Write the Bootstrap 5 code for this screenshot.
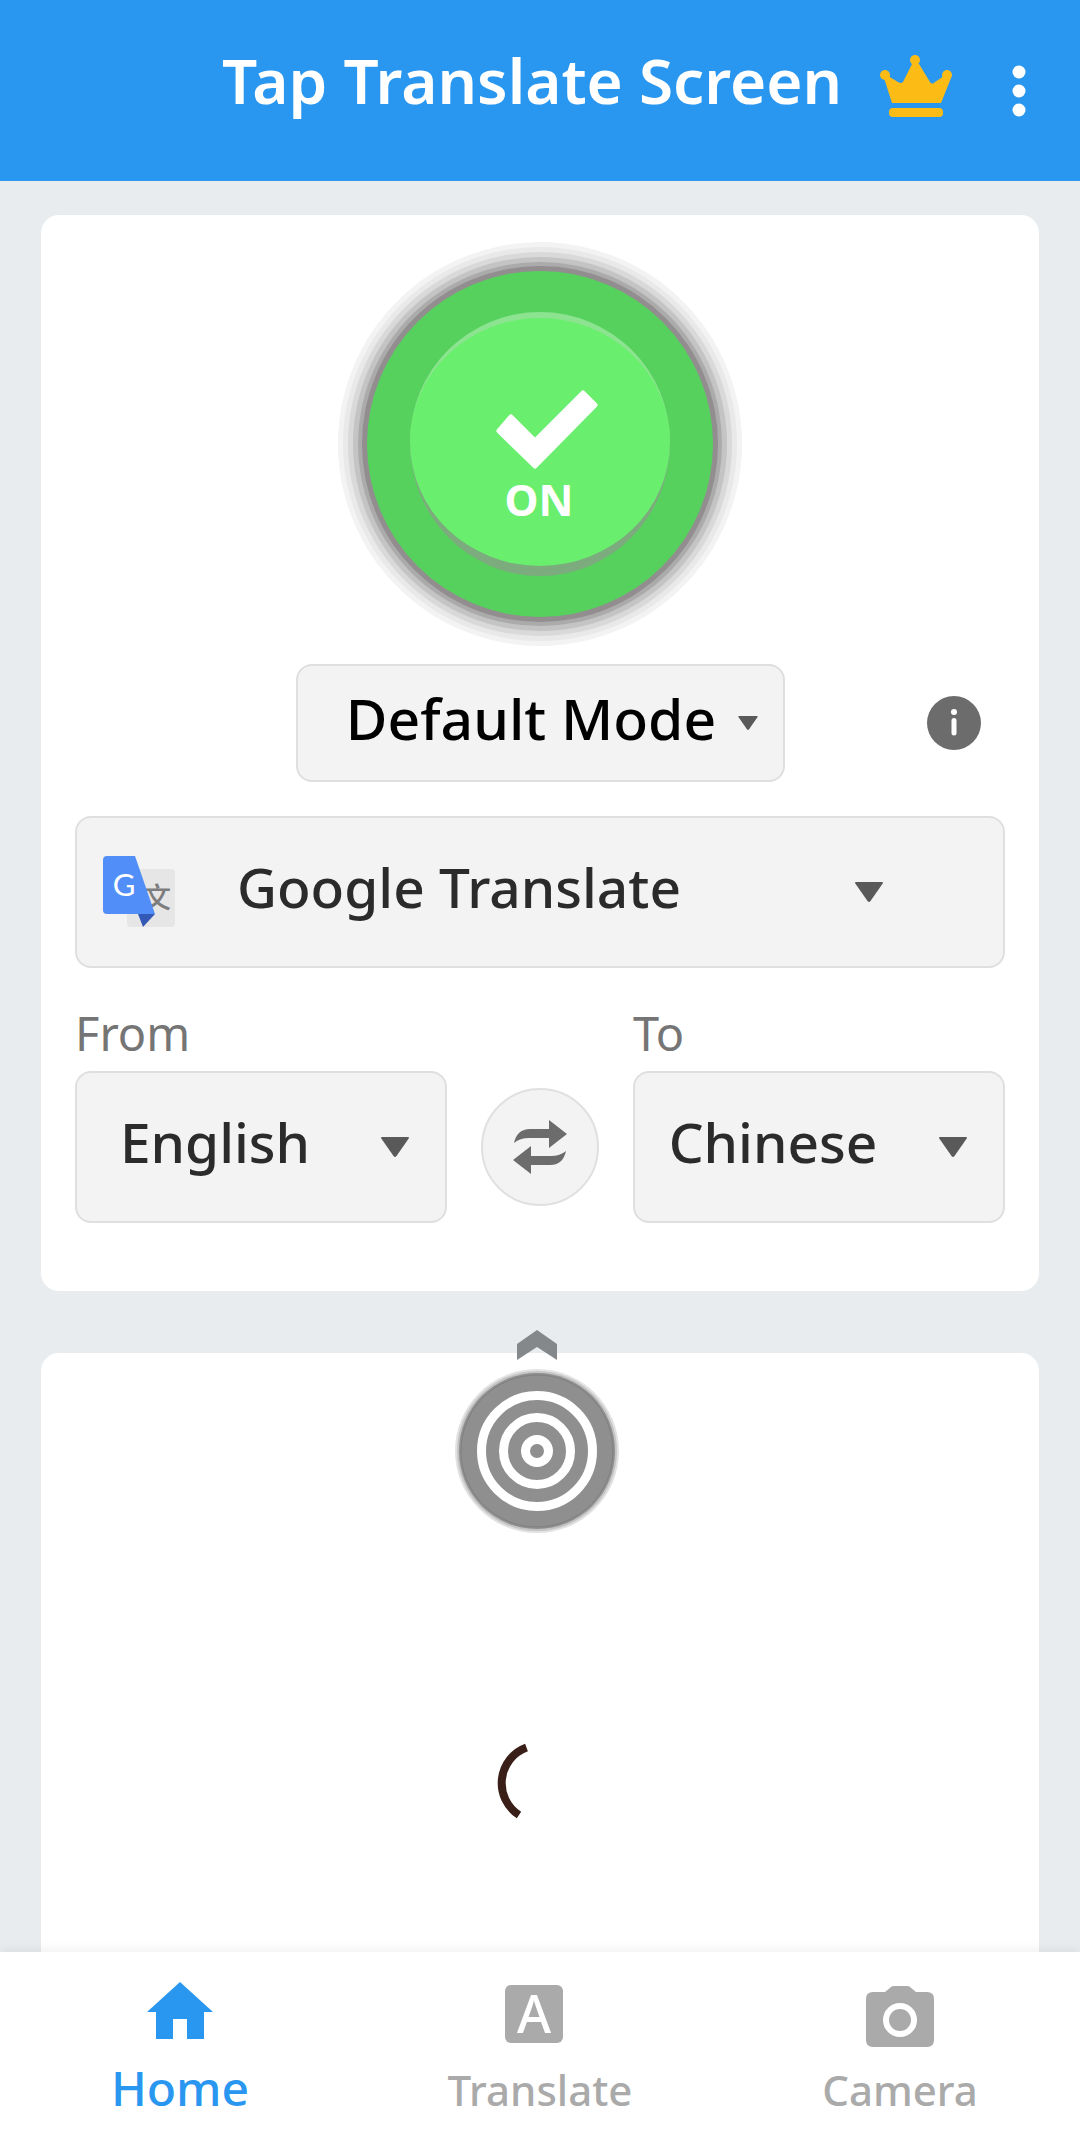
<!DOCTYPE html>
<html lang="en">
<head>
<meta charset="utf-8">
<meta name="viewport" content="width=device-width, initial-scale=1">
<title>Tap Translate Screen</title>
<link href="https://cdn.jsdelivr.net/npm/bootstrap@5.3.0/dist/css/bootstrap.min.css" rel="stylesheet">
<style>
  :root { --app-blue: #2997ef; --app-grey: #aaaaaa; }
  body { font-family: "Noto Sans", "Open Sans", sans-serif; background: #e8ecee; }
  svg { display: block; }
  .app-bar { background: var(--app-blue); height: 181px; padding: 0 48px 0 40px; }
  .app-title { font-size: 62px; line-height: 84px; font-weight: 600; padding-bottom: 21px; }
  .crown-btn { margin: 0 52px 10px 38px; }
  .app-main { padding: 34px 41px 0; }
  .panel { background: #fff; border-radius: 18px; }
  .panel-settings { padding: 24px 34px 68px; }
  .panel-preview { margin-top: 62px; padding-top: 387px; border-radius: 18px 18px 0 0; }
  .picker {
    height: 152px; padding: 0 92px 10px 0; border: 2px solid #dfdfdf; border-radius: 16px;
    background-color: #f3f3f3; color: #2b2b2b; font-size: 55px; line-height: 76px; font-weight: 500;
    text-align: center; text-align-last: center;
    background-image: url("data:image/svg+xml,%3Csvg xmlns='http://www.w3.org/2000/svg' viewBox='0 0 28 20'%3E%3Cpath d='M1 0H27Q28.500 0 27.700 1.500L15.500 19Q14 21 12.500 19L.3 1.500Q-.5 0 1 0Z' fill='%23595959'/%3E%3C/svg%3E");
    background-size: 28px 20px; background-position: right 36px center;
  }
  .picker-mode { height: 118px; width: 489px; padding-right: 18px; padding-left: 0; color: #000; font-size: 57px; background-size: 20px 14px; background-position: right 25px center; }
  .picker-engine { padding-left: 160px; text-align: left; text-align-last: left; background-position: right 120px center; }
  .engine-logo { left: 28px; top: 40px; pointer-events: none; }
  .mode-row { margin-top: 15px; }
  .engine-row { margin-top: 34px; }
  .lang-row { margin-top: 35px; }
  .lang-label { font-size: 47px; line-height: 60px; margin-bottom: 8px; color: #757575; }
  .info-btn { margin-right: 24px; }
  .swap-col { width: 186px; padding-bottom: 17px; }
  .swap-btn { width: 118px; height: 118px; border: 2px solid #e0e0e0; background: #f3f3f3; }
  .pull-handle { top: -25px; }
  .tab-bar { background: #fff; height: 185px; box-shadow: 0 -3px 10px rgba(0,0,0,.06); }
  .tab-item { padding-top: 28px; color: var(--app-grey); font-size: 42px; line-height: 64px; font-weight: 500; gap: 8px; }
  .tab-item.active { color: var(--app-blue); font-size: 48px; line-height: 60px; }
</style>
</head>
<body>
<div class="min-vh-100 d-flex flex-column">
  <header class="app-bar d-flex align-items-center justify-content-end">
    <h1 class="app-title text-white m-0">Tap Translate Screen</h1>
    <button type="button" class="crown-btn btn p-0 border-0" aria-label="Premium">
      <svg width="72" height="64" viewBox="0 0 72 64" fill="#fdbb16">
        <path d="M32 10H39L50 28Q52 31 55 28L64 22L71 24L61 49H12L4 24L8 22L18 28Q21 30 23 28Z"/>
        <circle cx="35" cy="6" r="5"/><circle cx="5" cy="21" r="5"/><circle cx="67" cy="21" r="5"/>
        <rect x="9" y="54" width="54" height="9" rx="4"/>
      </svg>
    </button>
    <button type="button" class="btn p-0 border-0" aria-label="More options">
      <svg width="28" height="56" viewBox="0 0 28 56" fill="#fff"><circle cx="15" cy="9" r="6.500"/><circle cx="15" cy="28" r="6.500"/><circle cx="15" cy="47" r="6.500"/></svg>
    </button>
  </header>

  <main class="app-main flex-grow-1 d-flex flex-column">
    <section class="panel panel-settings">
      <div class="d-flex justify-content-center">
        <button type="button" class="btn p-0 border-0 rounded-circle" aria-pressed="true">
          <svg width="410" height="410" viewBox="0 0 410 410">
            <circle cx="205" cy="205" r="202" fill="#f3f3f3"/>
            <circle cx="205" cy="205" r="197" fill="#e9e9e9"/>
            <circle cx="205" cy="205" r="192" fill="#d9d9d9"/>
            <circle cx="205" cy="205" r="187" fill="#c4c4c4"/>
            <circle cx="205" cy="205" r="182" fill="#ababab"/>
            <circle cx="205" cy="205" r="178" fill="#928e90"/>
            <circle cx="205" cy="205" r="173" fill="#57d15d"/>
            <circle cx="205" cy="203" r="130" fill="#8ce490"/>
            <path d="M75 204A130 133 0 0 0 335 204Z" fill="#7cac7e"/>
            <ellipse cx="205" cy="203" rx="130" ry="124" fill="#69ee6d"/>
            <path d="M176 178L200 202L248 154L260 166L200 227L164 192Z" fill="#fff" stroke="#fff" stroke-width="5" stroke-linejoin="round"/>
            <text x="204" y="277" text-anchor="middle" font-family="Noto Sans, sans-serif" font-weight="700" font-size="43" fill="#fff">ON</text>
          </svg>
        </button>
      </div>

      <div class="mode-row d-flex align-items-center">
        <div class="flex-fill w-25"></div>
        <select class="picker picker-mode form-select flex-shrink-0" aria-label="Mode"><option>Default Mode</option></select>
        <div class="flex-fill w-25 d-flex justify-content-end">
          <button type="button" class="info-btn btn p-0 border-0" aria-label="Information">
            <svg width="54" height="54" viewBox="0 0 54 54"><circle cx="27" cy="27" r="27" fill="#6c6c6c"/><circle cx="27" cy="16" r="3" fill="#fff"/><path d="M27 24.500V37" stroke="#fff" stroke-width="5" stroke-linecap="round"/></svg>
          </button>
        </div>
      </div>

      <div class="engine-row position-relative">
        <select class="picker picker-engine form-select" aria-label="Translation engine"><option>Google Translate</option></select>
        <svg class="engine-logo position-absolute" width="72" height="72" viewBox="0 0 72 72" aria-hidden="true">
          <rect x="24" y="13" width="48" height="58" rx="4" fill="#e6e6e6"/>
          <text x="40" y="52" font-family="Noto Sans CJK SC, sans-serif" font-weight="500" font-size="28" fill="#7d7d7d">文</text>
          <path d="M35 58H52L40 71Z" fill="#3458b5"/>
          <path d="M4 0H32L52 58H4Q0 58 0 54V4Q0 0 4 0Z" fill="#518ef8"/>
          <text x="21" y="40" text-anchor="middle" font-family="Lato, sans-serif" font-weight="400" font-size="31" fill="#fff">G</text>
        </svg>
      </div>

      <div class="lang-row d-flex align-items-end">
        <div class="flex-fill w-25">
          <label class="lang-label d-block" for="from">From</label>
          <select id="from" class="picker form-select"><option>English</option></select>
        </div>
        <div class="swap-col flex-shrink-0 d-flex justify-content-center">
          <button type="button" class="swap-btn btn rounded-circle p-0 d-flex align-items-center justify-content-center" aria-label="Swap languages">
            <svg width="56" height="56" viewBox="0 0 56 56" fill="#6c6c6c">
              <path d="M2 24Q5 10 18 10H37V1L55 15L37 29V19H17Q8 19 2 24Z"/>
              <path d="M54 32Q51 46 38 46H19V55L1 41L19 27V37H39Q48 37 54 32Z"/>
            </svg>
          </button>
        </div>
        <div class="flex-fill w-25">
          <label class="lang-label d-block" for="to">To</label>
          <select id="to" class="picker form-select"><option>Chinese</option></select>
        </div>
      </div>
    </section>

    <section class="panel panel-preview position-relative flex-grow-1 d-flex justify-content-center align-items-start">
      <svg class="pull-handle position-absolute" width="180" height="212" viewBox="0 0 180 212" aria-hidden="true">
        <path d="M87 2L107 16V32L87 19L67 32V16Z" fill="#84888a"/>
        <circle cx="87" cy="123" r="82" fill="#e2e2e2"/>
        <circle cx="87" cy="123" r="80" fill="#c4c4c4"/>
        <circle cx="87" cy="123" r="78" fill="#8f8f8f"/>
        <circle cx="87" cy="123" r="76" fill="none" stroke="#808080"/>
        <g fill="none" stroke="#fff" stroke-width="9"><circle cx="87" cy="123" r="55.500"/><circle cx="87" cy="123" r="33.500"/><circle cx="87" cy="123" r="11.500"/></g>
      </svg>
      <svg width="86" height="86" viewBox="0 0 86 86" role="status" aria-label="Loading"><path d="M29.500 7.500A38 38 0 0 0 22 75" fill="none" stroke="#3a1f18" stroke-width="8"/></svg>
    </section>
  </main>

  <nav class="tab-bar position-relative d-flex" aria-label="Main">
    <a href="#" class="tab-item active flex-fill w-25 d-flex flex-column align-items-center text-decoration-none" aria-current="page">
      <svg width="70" height="70" viewBox="0 0 70 70" fill="currentColor"><path d="M35 2L68 32H59V59H42V39H28V59H11V32H2Z"/></svg>
      Home
    </a>
    <a href="#" class="tab-item flex-fill w-25 d-flex flex-column align-items-center text-decoration-none">
      <svg class="overflow-visible" width="70" height="70" viewBox="0 0 70 70"><rect x="0" y="5" width="58" height="58" rx="6" fill="currentColor"/><text x="29" y="53" text-anchor="middle" font-size="52" fill="#fff">A</text></svg>
      Translate
    </a>
    <a href="#" class="tab-item flex-fill w-25 d-flex flex-column align-items-center text-decoration-none">
      <svg width="70" height="70" viewBox="0 0 70 70"><path d="M8 12H20L26 7Q27 6 29 6H42Q44 6 45 7L51 12H62Q69 12 69 19V60Q69 67 62 67H8Q1 67 1 60V19Q1 12 8 12Z" fill="currentColor"/><circle cx="35" cy="40" r="14" fill="none" stroke="#fff" stroke-width="6"/></svg>
      Camera
    </a>
  </nav>
</div>
<script src="https://cdn.jsdelivr.net/npm/bootstrap@5.3.0/dist/js/bootstrap.bundle.min.js"></script>
</body>
</html>
